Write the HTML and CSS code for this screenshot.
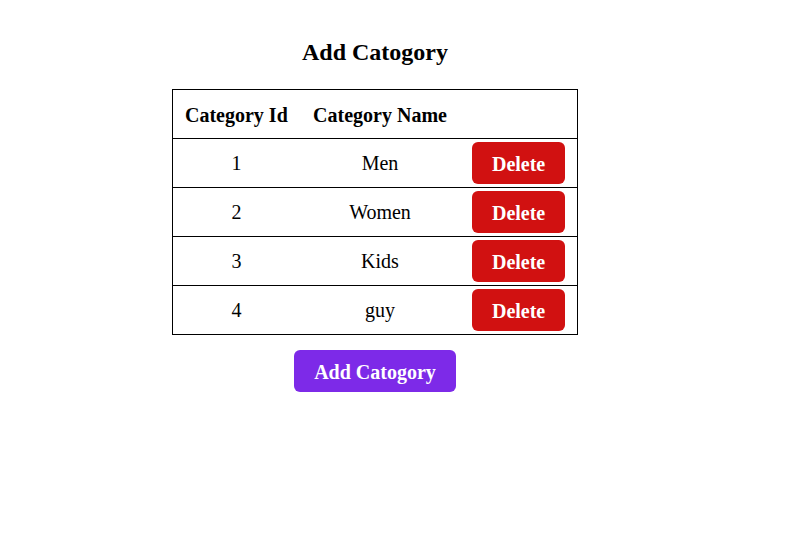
FILE: index.html
```html
<!DOCTYPE html>
<html lang="en">
<head>
<meta charset="utf-8">
<title>Add Catogory</title>
<link rel="stylesheet" href="styles.css">
</head>
<body>
<main class="page">
  <h2 class="title">Add Catogory</h2>
  <table class="cat-table">
    <colgroup>
      <col class="c-id">
      <col class="c-name">
      <col class="c-action">
    </colgroup>
    <thead>
      <tr>
        <th>Category Id</th>
        <th>Category Name</th>
        <th></th>
      </tr>
    </thead>
    <tbody>
      <tr><td>1</td><td>Men</td><td><button class="btn btn-delete">Delete</button></td></tr>
      <tr><td>2</td><td>Women</td><td><button class="btn btn-delete">Delete</button></td></tr>
      <tr><td>3</td><td>Kids</td><td><button class="btn btn-delete">Delete</button></td></tr>
      <tr><td>4</td><td>guy</td><td><button class="btn btn-delete">Delete</button></td></tr>
    </tbody>
  </table>
  <button class="btn btn-add">Add Catogory</button>
</main>
</body>
</html>
```
FILE: styles.css
```css
html, body {
  margin: 0;
  padding: 0;
  background: #ffffff;
}

body {
  font-family: "Liberation Serif", "Times New Roman", serif;
  color: #000000;
}

.page {
  width: 750px;
  padding-top: 38px;
  display: flex;
  flex-direction: column;
  align-items: center;
}

.title {
  margin: 0 0 23px 0;
  font-size: 24px;
  font-weight: bold;
  line-height: 28px;
}

.cat-table {
  border-collapse: collapse;
  border: 1px solid #000000;
  table-layout: fixed;
  width: 406px;
  font-size: 20px;
}

.c-id { width: 127px; }
.c-name { width: 160px; }
.c-action { width: 117px; }

.cat-table tr {
  border-bottom: 1px solid #000000;
}

.cat-table th {
  padding: 13px 0 11px;
  line-height: 24px;
  font-weight: bold;
  text-align: center;
  white-space: nowrap;
}

.cat-table td {
  padding: 3px 0;
  line-height: 24px;
  text-align: center;
  vertical-align: middle;
}

.cell-text {
  display: inline-block;
}

.btn {
  font-family: "Liberation Serif", "Times New Roman", serif;
  font-size: 20px;
  font-weight: bold;
  line-height: 24px;
  color: #ffffff;
  border: none;
  border-radius: 6px;
  padding: 10px 0 8px;
  cursor: pointer;
  display: block;
}

.btn-delete {
  background: #d11111;
  margin: 0 auto;
  width: 93px;
}

.btn-add {
  margin-top: 15px;
  background: #7d2ae8;
  width: 162px;
}
```
